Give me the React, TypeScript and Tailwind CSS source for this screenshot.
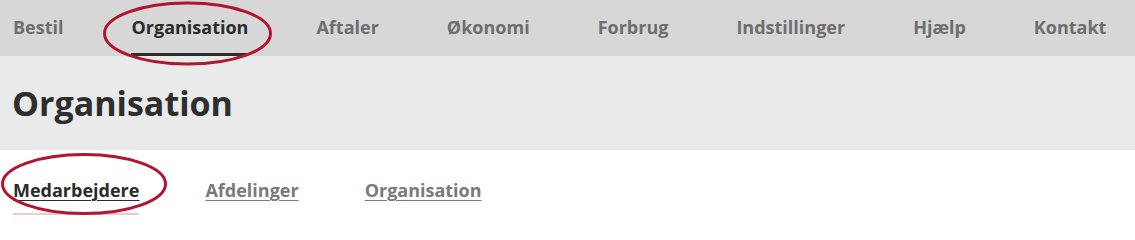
const NAV = ["Bestil", "Organisation", "Aftaler", "Økonomi", "Forbrug", "Indstillinger", "Hjælp", "Kontakt"];
const TABS = ["Medarbejdere", "Afdelinger", "Organisation"];

export default function App() {
  return (
    <div className="relative h-[215px] w-[1135px] overflow-hidden bg-white font-['Open_Sans',sans-serif]">
      {/* top nav */}
      <nav className="flex h-[56px] items-stretch gap-[68px] bg-[#d7d7d7] pl-[13px]">
        {NAV.map((item) => {
          const active = item === "Organisation";
          return (
            <a
              key={item}
              className={
                active
                  ? "flex items-center border-b-[3px] border-[#2d2d2d] pt-[2px] text-[18px] font-bold text-[#2b2b2b]"
                  : "flex items-center pt-[2px] pb-[3px] text-[18px] font-bold text-[#6e6e6e]"
              }
            >
              {item}
            </a>
          );
        })}
      </nav>

      {/* page header */}
      <header className="flex h-[94px] items-center bg-[#e8ebea] pl-[12px]">
        <h1 className="text-[34px] font-bold text-[#2e2e2e]">Organisation</h1>
      </header>

      {/* sub tabs */}
      <div className="flex gap-[66px] pl-[13px] pt-[28px]">
        {TABS.map((tab) => {
          const active = tab === "Medarbejdere";
          return (
            <div key={tab} className="flex flex-col">
              <a
                className={
                  active
                    ? "text-[18px] leading-[25px] font-bold text-[#2b2b2b] underline decoration-1 underline-offset-[3px]"
                    : "text-[18px] leading-[25px] font-bold text-[#7a7a7a] underline decoration-1 underline-offset-[3px]"
                }
              >
                {tab}
              </a>
              {active && <span className="mt-[10px] h-[3px] w-full bg-[#f2c9cf]" />}
            </div>
          );
        })}
      </div>

      {/* annotation circles */}
      <svg className="pointer-events-none absolute left-0 top-0" width="1135" height="215">
        <ellipse cx="187.5" cy="33.5" rx="83" ry="30.5" fill="none" stroke="#b3142f" strokeWidth="3" />
        <ellipse cx="84" cy="184" rx="81.5" ry="29.5" fill="none" stroke="#b3142f" strokeWidth="3" />
      </svg>
    </div>
  );
}
